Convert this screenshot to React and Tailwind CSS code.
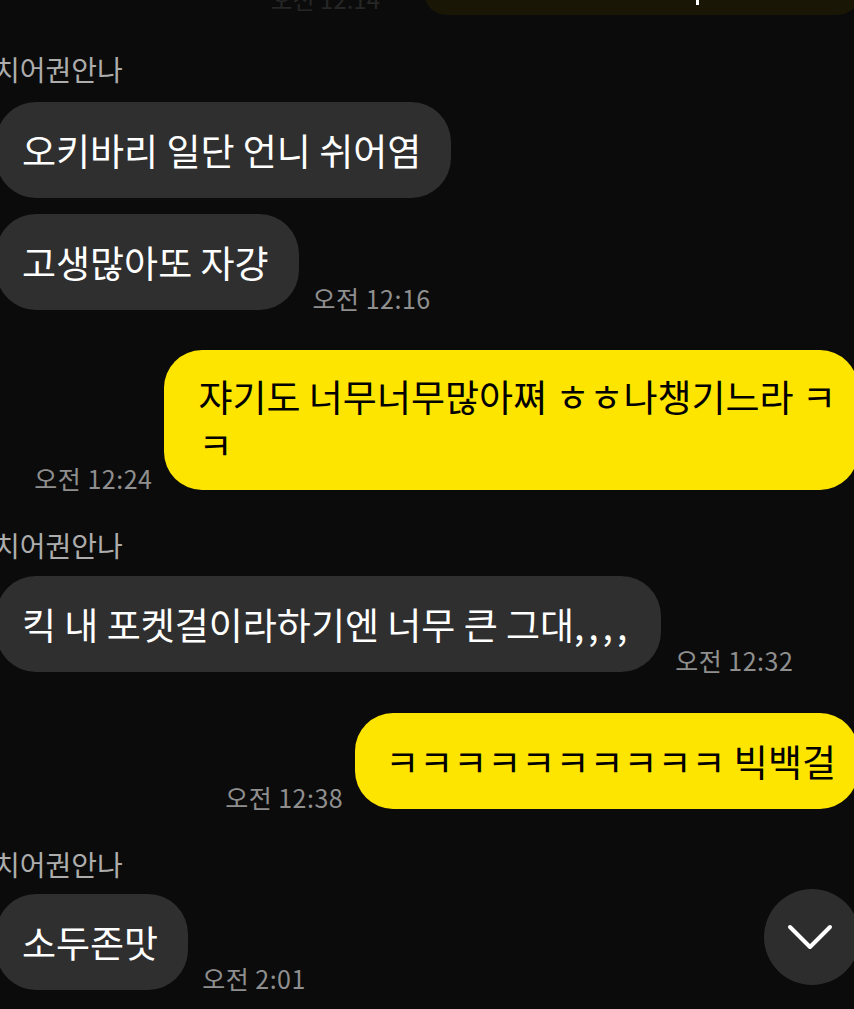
const font = { fontFamily: '"Noto Sans CJK KR", "Noto Sans", sans-serif' };

function Stamp({ children }) {
  return (
    <span className="shrink-0 text-[25px] leading-[28px] tracking-[0.5px] text-[#8f8f8f] mb-[-2px] whitespace-nowrap">
      {children}
    </span>
  );
}

function Name({ children, className = "" }) {
  return (
    <div className={`text-[28px] leading-[34px] text-[#adadad] -ml-[6px] ${className}`}>
      {children}
    </div>
  );
}

function Incoming({ children, stamp, className = "" }) {
  return (
    <div className={`flex items-end gap-[14px] ${className}`}>
      <div className="-ml-[4px] bg-[#2f2f2f] rounded-[40px] pl-[26px] pr-[30px] py-[24px] text-[37px] leading-[48px] text-white whitespace-nowrap">
        {children}
      </div>
      {stamp && <Stamp>{stamp}</Stamp>}
    </div>
  );
}

function Outgoing({ children, stamp, className = "", pad = "py-[24px]" }) {
  return (
    <div className={`flex items-end justify-end gap-[12px] ${className}`}>
      {stamp && <Stamp>{stamp}</Stamp>}
      <div
        className={`-mr-[4px] bg-[#fee500] rounded-[38px] pl-[30px] pr-[22px] ${pad} text-[37px] leading-[48px] text-black whitespace-nowrap`}
      >
        {children}
      </div>
    </div>
  );
}

export default function App() {
  return (
    <div
      className="relative h-screen w-full overflow-hidden bg-[#0b0b0b]"
      style={font}
    >
      <div className="flex flex-col">
        {/* clipped previous message */}
        <div className="flex items-end justify-end gap-[44px] -mt-[30px] h-[45px]">
          <span className="text-[24px] leading-[28px] text-[#262626] mb-[2px]">오전 12:14</span>
          <div className="relative h-[45px] w-[436px] -mr-[6px] rounded-[30px] bg-[#191606]">
            <span className="absolute left-[14px] bottom-[15px] h-[2px] w-[4px] bg-white" />
            <span className="absolute left-[272px] bottom-[10px] h-[5px] w-[3px] bg-white" />
          </div>
        </div>

        <Name className="mt-[37px]">치어권안나</Name>
        <Incoming className="mt-[16px]">오키바리 일단 언니 쉬어염</Incoming>
        <Incoming className="mt-[16px]" stamp="오전 12:16">
          고생많아또 자걍
        </Incoming>

        <Outgoing className="mt-[40px]" stamp="오전 12:24" pad="pl-[34px] py-[22px]">
          쟈기도 너무너무많아쪄 ㅎㅎ나챙기느라 ㅋ
          <br />ㅋ
        </Outgoing>

        <Name className="mt-[38px]">치어권안나</Name>
        <Incoming className="mt-[14px]" stamp="오전 12:32">
          킥 내 포켓걸이라하기엔 너무 큰 그대
          <span className="tracking-[4px]">,,,,</span>
        </Incoming>

        <Outgoing className="mt-[41px]" stamp="오전 12:38">
          ㅋㅋㅋㅋㅋㅋㅋㅋㅋㅋ 빅백걸
        </Outgoing>

        <Name className="mt-[38px]">치어권안나</Name>
        <Incoming className="mt-[13px]" stamp="오전 2:01">
          소두존맛
        </Incoming>
      </div>

      {/* scroll to bottom button */}
      <button className="absolute left-[764px] top-[889px] flex h-[96px] w-[96px] items-center justify-center rounded-full bg-[#2d2d2d]">
        <svg
          width="46"
          height="28"
          viewBox="0 0 46 28"
          fill="none"
          stroke="#ffffff"
          strokeWidth="4"
          strokeLinecap="round"
          strokeLinejoin="round"
          className="-ml-[4px]"
        >
          <polyline points="3,4 23,24 43,4" />
        </svg>
      </button>
    </div>
  );
}
